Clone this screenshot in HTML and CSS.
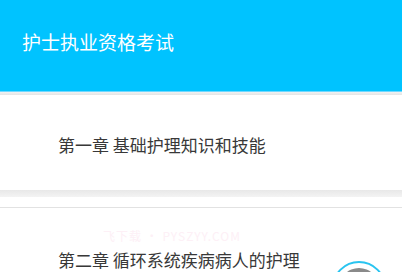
FILE: index.html
```html
<!DOCTYPE html>
<html lang="zh">
<head>
<meta charset="utf-8">
<link rel="stylesheet" href="styles.css">
</head>
<body>
<div class="screen">
  <header class="bar">
    <h1 class="title">护士执业资格考试</h1>
  </header>
  <div class="strip"></div>
  <main class="list">
    <section class="item item-first">
      <span class="item-text">第一章 基础护理知识和技能</span>
    </section>
    <div class="gap"></div>
    <div class="spacer"></div>
    <section class="item item-second">
      <span class="watermark">飞下载 · PYSZYY.COM</span>
      <span class="item-text">第二章 循环系统疾病病人的护理</span>
    </section>
  </main>
  <div class="fab"><div class="fab-inner"></div></div>
</div>
</body>
</html>
```
FILE: styles.css
```css
html, body {
  margin: 0;
  padding: 0;
  background: #ffffff;
  font-family: "Noto Sans CJK SC", "Noto Sans", sans-serif;
}
.screen {
  position: relative;
  height: 272px;
  overflow: hidden;
}
.bar {
  background: #00c3ff;
  border-bottom: 1px solid #6fd8ff;
  display: flex;
  align-items: center;
  padding-left: 22px;
  box-sizing: border-box;
  height: 92px;
}
.title {
  margin: 0;
  color: #ffffff;
  font-weight: 400;
  font-size: 19px;
  line-height: 1;
  position: relative;
  top: -4px;
}
.strip {
  height: 3px;
  background: linear-gradient(#f2f2f2, #e4e4e4);
}
.list {
  display: flex;
  flex-direction: column;
}
.item {
  background: #ffffff;
  display: flex;
  align-items: center;
  padding-left: 58px;
  position: relative;
}
.item-first {
  height: 95px;
}
.item-second {
  height: 65px;
  border-top: 1px solid #e2e2e2;
}
.item-text {
  font-size: 17px;
  color: #383838;
  line-height: 1;
  position: relative;
}
.item-first .item-text {
  top: 2px;
}
.item-second .item-text {
  top: 19px;
}
.gap {
  height: 7px;
  background: linear-gradient(#e8e8e8, #f3f3f3);
}
.spacer {
  height: 10px;
  background: #ffffff;
}
.watermark {
  position: absolute;
  left: 103px;
  top: 22px;
  font-size: 12px;
  line-height: 1;
  color: #fdf0f6;
  letter-spacing: 1px;
}
.fab {
  position: absolute;
  left: 332px;
  top: 261px;
  width: 54px;
  height: 54px;
  border-radius: 50%;
  border: 2px solid #29c4f0;
  background: #ffffff;
  box-sizing: border-box;
  display: flex;
  align-items: center;
  justify-content: center;
}
.fab-inner {
  width: 40px;
  height: 40px;
  border-radius: 50%;
  background: #8a8a8a;
}
```
